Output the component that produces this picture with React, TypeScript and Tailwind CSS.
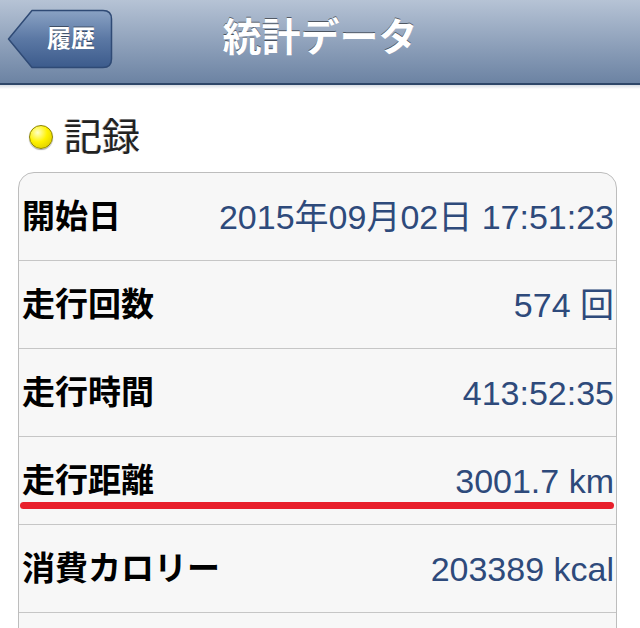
import React from "react";

const rows = [
  { label: "開始日", value: "2015年09月02日 17:51:23" },
  { label: "走行回数", value: "574 回" },
  { label: "走行時間", value: "413:52:35" },
  { label: "走行距離", value: "3001.7 km", mark: true },
  { label: "消費カロリー", value: "203389 kcal" },
  { label: "", value: "" },
];

const BackButton = () => {
  return (
    <div className="relative w-[106px] h-[60px] flex items-center justify-center pl-[22px]">
      <svg className="absolute inset-0" width="106" height="60" viewBox="0 0 106 60">
        <defs>
          <linearGradient id="bb" x1="0" y1="0" x2="0" y2="1">
            <stop offset="0" stopColor="#8aa2c4" />
            <stop offset="0.5" stopColor="#5b78a4" />
            <stop offset="1" stopColor="#3c5b8c" />
          </linearGradient>
        </defs>
        <path
          d="M1.5 30 L25 1.5 L96 1.5 Q104.5 1.5 104.5 10 L104.5 50 Q104.5 58.5 96 58.5 L25 58.5 Z"
          fill="url(#bb)"
          stroke="#2f4a75"
          strokeWidth="1.5"
          strokeLinejoin="round"
        />
      </svg>
      <span className="relative text-white font-bold text-[24px] leading-none [text-shadow:0_-1px_0_rgba(0,0,0,0.45)]">
        履歴
      </span>
    </div>
  );
};

const App = () => {
  return (
    <div className="w-[640px] h-[628px] overflow-hidden bg-white font-['Liberation_Sans','Noto_Sans_CJK_JP',sans-serif]">
      <div className="relative h-[85px] flex items-center bg-gradient-to-b from-[#b6c3d5] to-[#6c83a3] border-b-2 border-[#2f4769]">
        <div className="absolute left-[7px] top-[9px]">
          <BackButton />
        </div>
        <div className="w-full text-center text-white font-bold text-[39px] leading-none pb-[8px] [text-shadow:0_-1px_0_rgba(0,0,0,0.5)]">
          統計データ
        </div>
      </div>
      <div className="h-[4px] bg-gradient-to-b from-[#d8dde4] to-white" />

      <div className="h-[83px] flex items-center pl-[29px] gap-[11px] pt-[13px]">
        <div className="w-[24px] h-[24px] rounded-full border border-[#8c8400] bg-[radial-gradient(circle_at_35%_30%,#ffffc8_0%,#fff200_45%,#d2c000_100%)] shadow-[0_1px_1px_rgba(0,0,0,0.35)]" />
        <div className="text-[38px] leading-none text-[#222] [text-shadow:1px_1px_0_#ffffff,-1px_0_0_#bbbbbb]">記録</div>
      </div>

      <div className="ml-[18px] mr-[23px] rounded-t-[16px] border border-[#bdbdbd] bg-[#f7f7f7] overflow-hidden">
        {rows.map((r, i) => (
          <div
            key={i}
            className="relative h-[88px] flex items-center justify-between pl-[3px] pr-[2px] border-b border-[#c6c6c6]"
          >
            <span className="font-bold text-[33px] leading-none text-black">{r.label}</span>
            <span className="text-[34px] leading-none text-[#2e4a7b]">{r.value}</span>
            {r.mark && (
              <div className="absolute left-[1px] right-[2px] top-[65px] h-[7px] rounded-full bg-[#e81f2b]" />
            )}
          </div>
        ))}
      </div>
    </div>
  );
};

export default App;
